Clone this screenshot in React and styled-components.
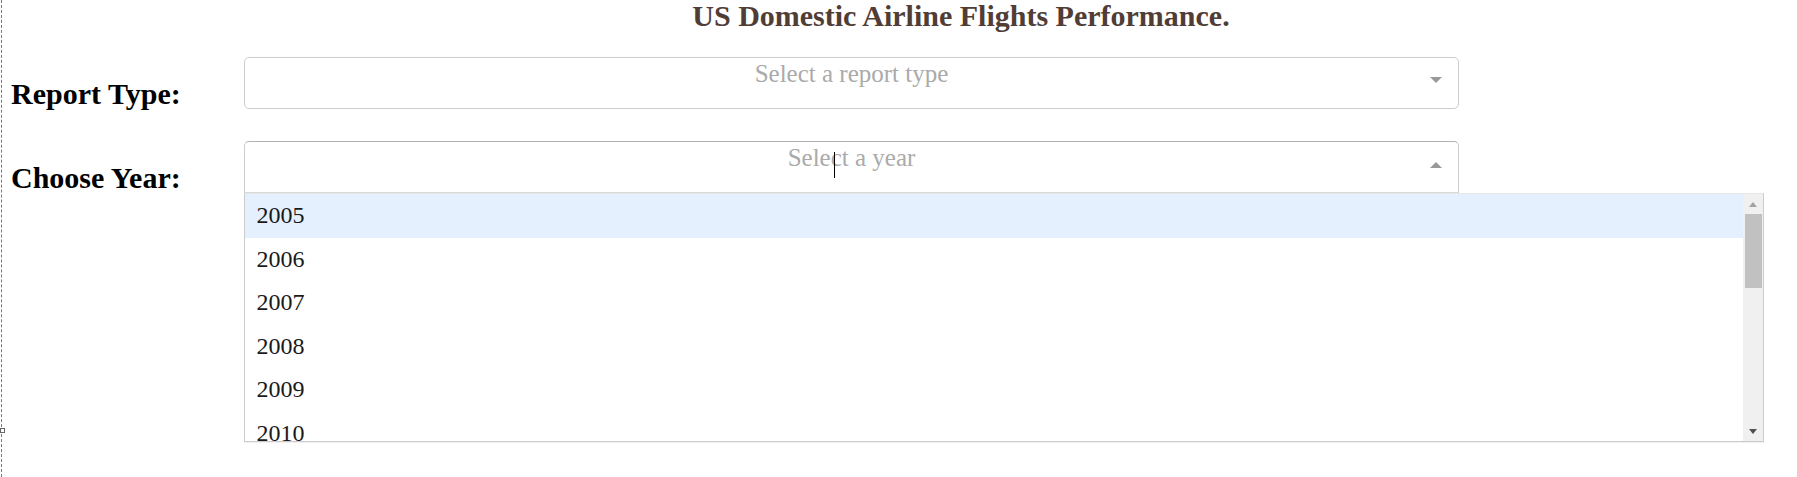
import React from "react";
import styled, { createGlobalStyle, css } from "styled-components";

const GlobalStyle = createGlobalStyle`
  html, body { margin: 0; padding: 0; background: #ffffff; }
  body { font-family: "Liberation Serif", "Times New Roman", serif; overflow: hidden; }
`;

const Page = styled.div`
  position: relative;
  margin-left: 1px;
  border-left: 1px dashed #3d82d4;
  min-height: 477px;
  box-sizing: border-box;
  padding-left: 9px;
`;

const Handle = styled.div`
  position: absolute;
  left: -2px;
  top: 428px;
  width: 3px;
  height: 3px;
  background: #ffffff;
  border: 1px solid #666;
`;

const Title = styled.h1`
  margin: 0;
  padding-left: 114px;
  font-family: "Liberation Serif", serif;
  font-weight: bold;
  font-size: 30px;
  line-height: 32px;
  text-align: center;
  color: #503d36;
`;

const Form = styled.div`
  display: flex;
  flex-direction: column;
  gap: 32px;
  margin-top: 25px;
`;

const FieldRow = styled.div`
  display: flex;
  align-items: flex-start;
  height: 52px;
`;

const Label = styled.h2`
  flex: 0 0 233px;
  margin: 22px 0 0 0;
  font-family: "Liberation Serif", serif;
  font-weight: bold;
  font-size: 30px;
  line-height: 30px;
  color: #000;
  white-space: nowrap;
`;

const Dropdown = styled.div`
  position: relative;
  width: 1215px;
  flex-shrink: 0;
`;

const Control = styled.div`
  position: relative;
  display: flex;
  height: 52px;
  box-sizing: border-box;
  border: 1px solid #cccccc;
  border-radius: 5px;
  background: #fff;
  ${(p) =>
    p.$open &&
    css`
      border-color: #b3b3b3 #cccccc #d9d9d9;
      border-bottom-left-radius: 0;
      border-bottom-right-radius: 0;
    `}
`;

const ValueArea = styled.div`
  flex: 1;
  padding-left: 29px;
  padding-top: 1.3px;
  text-align: center;
`;

const Placeholder = styled.span`
  font-family: "Liberation Serif", serif;
  font-size: 25px;
  line-height: 30px;
  color: #aaaaaa;
`;

const Caret = styled.span`
  position: absolute;
  left: 589px;
  top: 10px;
  width: 1px;
  height: 26px;
  background: #000;
`;

const ArrowZone = styled.div`
  width: 29px;
  box-sizing: border-box;
  padding-right: 16px;
  display: flex;
  justify-content: flex-end;
  align-items: flex-start;
`;

const Arrow = styled.span`
  width: 0;
  height: 0;
  border-left: 6px solid transparent;
  border-right: 6px solid transparent;
  ${(p) =>
    p.$up
      ? css`
          margin-top: 20px;
          border-bottom: 6px solid #999999;
        `
      : css`
          margin-top: 19px;
          border-top: 6px solid #999999;
        `}
`;

const Menu = styled.div`
  position: absolute;
  top: 100%;
  left: 0;
  width: 1520px;
  height: 249px;
  box-sizing: border-box;
  border: 1px solid #cccccc;
  border-top-color: #e6e6e6;
  box-shadow: 0 1px 0 rgba(0, 0, 0, 0.06);
  background: #fff;
  display: flex;
  overflow: hidden;
`;

const OptionList = styled.div`
  flex: 1;
  overflow: hidden;
`;

const Option = styled.div`
  height: 43.6px;
  line-height: 42.6px;
  padding: 0 11.5px;
  font-family: "Liberation Serif", serif;
  font-size: 24px;
  color: #1a1a1a;
  background: ${(p) => (p.$focused ? "#e4f0fd" : "#ffffff")};
`;

const Scrollbar = styled.div`
  width: 20px;
  flex-shrink: 0;
  background: #f0f0f0;
  display: flex;
  flex-direction: column;
  align-items: stretch;
`;

const ScrollButton = styled.div`
  height: 20px;
  display: flex;
  justify-content: center;
  align-items: center;
`;

const ScrollTriangle = styled.span`
  width: 0;
  height: 0;
  border-left: 4.5px solid transparent;
  border-right: 4.5px solid transparent;
  ${(p) =>
    p.$up
      ? css`
          border-bottom: 5px solid #a3a3a3;
        `
      : css`
          border-top: 5px solid #505050;
        `}
`;

const Track = styled.div`
  flex: 1;
`;

const Thumb = styled.div`
  height: 74px;
  margin: 0 1px 0 2px;
  background: #c1c1c1;
`;

const years = ["2005", "2006", "2007", "2008", "2009", "2010"];

export default function App() {
  return (
    <>
      <GlobalStyle />
      <Page>
        <Title>US Domestic Airline Flights Performance.</Title>
        <Form>
          <FieldRow>
            <Label>Report Type:</Label>
            <Dropdown>
              <Control>
                <ValueArea>
                  <Placeholder>Select a report type</Placeholder>
                </ValueArea>
                <ArrowZone>
                  <Arrow />
                </ArrowZone>
              </Control>
            </Dropdown>
          </FieldRow>
          <FieldRow>
            <Label>Choose Year:</Label>
            <Dropdown>
              <Control $open>
                <ValueArea>
                  <Placeholder>Select a year</Placeholder>
                </ValueArea>
                <Caret />
                <ArrowZone>
                  <Arrow $up />
                </ArrowZone>
              </Control>
              <Menu>
                <OptionList>
                  {years.map((y, i) => (
                    <Option key={y} $focused={i === 0}>
                      {y}
                    </Option>
                  ))}
                </OptionList>
                <Scrollbar>
                  <ScrollButton>
                    <ScrollTriangle $up />
                  </ScrollButton>
                  <Track>
                    <Thumb />
                  </Track>
                  <ScrollButton>
                    <ScrollTriangle />
                  </ScrollButton>
                </Scrollbar>
              </Menu>
            </Dropdown>
          </FieldRow>
        </Form>
        <Handle />
      </Page>
    </>
  );
}
